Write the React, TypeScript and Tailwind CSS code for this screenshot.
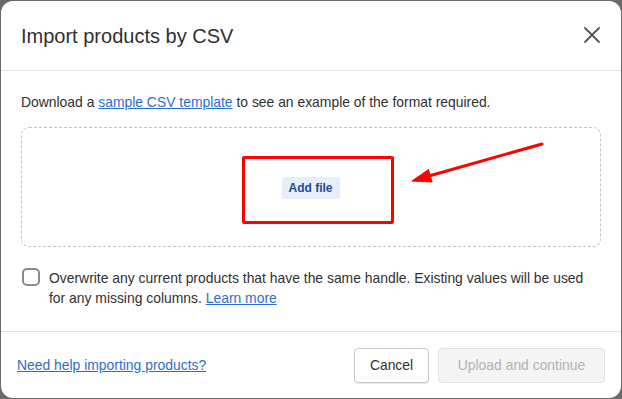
import React from "react";

export default function App() {
  return (
    <div className="w-[622px] h-[399px] bg-[#6a6a6a] p-px overflow-hidden" style={{ fontFamily: '"Liberation Sans", Arial, sans-serif' }}>
      <div className="w-full h-full bg-white rounded-[12px] flex flex-col text-[#303030]">
        {/* header */}
        <div className="h-[70px] flex items-center justify-between pl-[20px] pr-[21px] border-b border-[#e3e3e3] shrink-0">
          <h1 className="text-[20px] font-normal leading-none mt-[1px]">Import products by CSV</h1>
          <svg width="16" height="16" viewBox="0 0 16 16" className="-mt-[2px]">
            <path d="M1 1 L15 15 M15 1 L1 15" stroke="#555" strokeWidth="1.8" strokeLinecap="round" />
          </svg>
        </div>
        {/* body */}
        <div className="flex-1 px-[20px] pt-[21px] border-b border-[#e3e3e3]">
          <p className="text-[13.9px] leading-[20px]">
            Download a <span className="text-[#2c6ecb] underline">sample CSV template</span> to see an example of the format required.
          </p>
          <div className="relative mt-[15px] h-[120px] border border-dashed border-[#c4c4c4] rounded-[8px] flex items-center justify-center">
            <div className="w-[152px] h-[68px] border-[3px] border-[#ff0000] rounded-[2px] flex items-center justify-center ml-[13px] mt-[6px]">
              <span className="bg-[#e6eefb] text-[#1f4c8f] text-[12px] font-semibold px-[7px] py-[2px] rounded-[3px] mr-[14px] mb-[5px]">Add file</span>
            </div>
            <svg className="absolute left-[380px] top-[10px]" width="150" height="60" viewBox="0 0 150 60">
              <path d="M140 6 L27 38" stroke="#ff0000" strokeWidth="3" strokeLinecap="round" />
              <path d="M10 43 L26.5 31.5 L30.1 44 Z" fill="#ff0000" stroke="#ff0000" strokeWidth="1" strokeLinejoin="round" />
            </svg>
          </div>
          <div className="flex items-start gap-[9px] mt-[21px]">
            <span className="w-[18px] h-[18px] border-2 border-[#8a8a8a] rounded-[5px] shrink-0 ml-[1px] mt-[0px]" />
            <p className="text-[13.9px] leading-[20px]">
              Overwrite any current products that have the same handle. Existing values will be used for any missing columns. <span className="text-[#2c6ecb] underline">Learn more</span>
            </p>
          </div>
        </div>
        {/* footer */}
        <div className="h-[66px] flex items-center justify-between pl-[16px] pr-[16px] shrink-0">
          <span className="text-[13.9px] text-[#2c6ecb] underline">Need help importing products?</span>
          <div className="flex gap-[9px]">
            <button className="h-[35px] w-[75px] text-[13.9px] border border-[#c9c9c9] rounded-[4px] bg-white text-[#303030] shadow-[0_1px_0_rgba(0,0,0,0.08)]">Cancel</button>
            <button className="h-[35px] w-[167px] text-[13.9px] border border-[#e3e3e3] rounded-[4px] bg-[#f4f4f4] text-[#b3b3b3]">Upload and continue</button>
          </div>
        </div>
      </div>
    </div>
  );
}
